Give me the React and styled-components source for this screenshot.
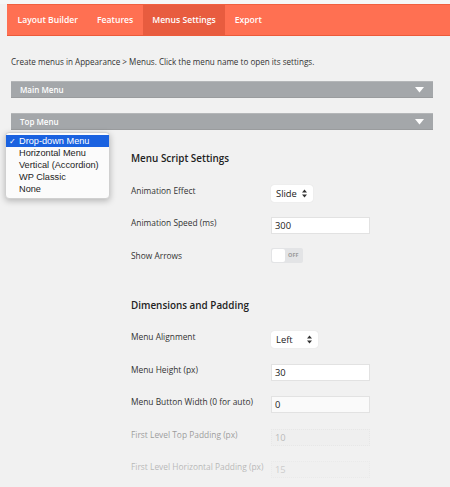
import React from 'react';
import styled, { createGlobalStyle } from 'styled-components';

const GlobalStyle = createGlobalStyle`
  html, body {
    margin: 0;
    padding: 0;
    background: #f1f1f1;
    font-family: "Open Sans", "Liberation Sans", sans-serif;
    color: #333;
  }
`;

const tabs = ['Layout Builder', 'Features', 'Menus Settings', 'Export'];
const menuOptions = ['Drop-down Menu', 'Horizontal Menu', 'Vertical (Accordion)', 'WP Classic', 'None'];

function Arrow() {
    return (
        <svg width="9" height="6" viewBox="0 0 9 6">
            <path d="M0 0 L9 0 L4.5 5.5 Z" fill="#fff" />
        </svg>
    )
}

function Stepper() {
    return (
        <svg width="5" height="9" viewBox="0 0 5 9">
            <path d="M2.5 0.5 L5 3.5 L0 3.5 Z M2.5 8.5 L5 5.5 L0 5.5 Z" fill="#333" />
        </svg>
    )
}

function App() {
    return (
        <Page>
            <GlobalStyle />
            <Nav>
                {tabs.map(t => (
                    <Tab key={t} active={t === 'Menus Settings'}>{t}</Tab>
                ))}
            </Nav>
            <Intro>Create menus in Appearance &gt; Menus. Click the menu name to open its settings.</Intro>
            <MenuBar>
                <span>Main Menu</span>
                <Arrow />
            </MenuBar>
            <MenuBlock>
                <MenuBar>
                    <span>Top Menu</span>
                    <Arrow />
                </MenuBar>
                <Popup>
                    {menuOptions.map((o, i) => (
                        <Option key={o} selected={i === 0}>
                            <Check>{i === 0 ? '✓' : ''}</Check>{o}
                        </Option>
                    ))}
                </Popup>
                <Settings>
                    <Heading>Menu Script Settings</Heading>
                    <Row>
                        <Label>Animation Effect</Label>
                        <Select width={42}>Slide <Stepper /></Select>
                    </Row>
                    <Row>
                        <Label>Animation Speed (ms)</Label>
                        <Input>300</Input>
                    </Row>
                    <Row>
                        <Label>Show Arrows</Label>
                        <Toggle>
                            <Knob />
                            <ToggleText>OFF</ToggleText>
                        </Toggle>
                    </Row>
                    <Heading second>Dimensions and Padding</Heading>
                    <Row>
                        <Label>Menu Alignment</Label>
                        <Select width={47}>Left <Stepper /></Select>
                    </Row>
                    <Row>
                        <Label>Menu Height (px)</Label>
                        <Input>30</Input>
                    </Row>
                    <Row>
                        <Label>Menu Button Width (0 for auto)</Label>
                        <Input muted>0</Input>
                    </Row>
                    <Row faded={0.45}>
                        <Label>First Level Top Padding (px)</Label>
                        <Input disabled>10</Input>
                    </Row>
                    <Row faded={0.3}>
                        <Label>First Level Horizontal Padding (px)</Label>
                        <Input disabled>15</Input>
                    </Row>
                </Settings>
            </MenuBlock>
        </Page>
    )
}

const Page = styled.div`
    width: 450px;
    height: 487px;
    overflow: hidden;
    padding-top: 4px;
    box-sizing: border-box;
    background: linear-gradient(#f5f7f7, #f5f7f7) top / 100% 4px no-repeat, #f1f1f1;
`;

const Nav = styled.div`
    display: flex;
    margin-left: 7px;
    height: 32px;
    background: #ff7052;
    border-top: 1px solid #f0603f;
    border-bottom: 1px solid #ec5a3a;
    box-sizing: border-box;
    padding-left: 1px;
`;

const Tab = styled.div`
    display: flex;
    align-items: center;
    padding: 0 9.5px;
    font-size: 8.6px;
    font-weight: 600;
    color: #fff;
    background: ${p => p.active ? '#e85c3f' : 'transparent'};
`;

const Intro = styled.div`
    margin: 20px 0 0 11px;
    font-size: 8.1px;
    color: #333;
    height: 12px;
`;

const MenuBar = styled.div`
    display: flex;
    align-items: center;
    justify-content: space-between;
    margin: 13px 17px 0 11px;
    height: 17px;
    padding: 0 9px 0 9px;
    background: #a4a7aa;
    border-top: 1px solid #b4b6b8;
    border-bottom: 1px solid #9a9c9e;
    box-sizing: border-box;
    font-size: 8px;
    font-weight: 600;
    color: #fff;
`;

const MenuBlock = styled.div`
    position: relative;
    margin-top: 15px;
    & > ${MenuBar} {
        margin-top: 0;
    }
`;

const Popup = styled.div`
    position: absolute;
    left: 5px;
    top: 19px;
    width: 105px;
    padding: 2px 0 3px;
    background: #fbfbfb;
    border: 1px solid #d0d0d0;
    border-radius: 4px;
    box-shadow: 0 2px 6px rgba(0, 0, 0, 0.25);
    box-sizing: border-box;
    font-family: "Liberation Sans", Arial, sans-serif;
    font-size: 9.2px;
`;

const Option = styled.div`
    display: flex;
    align-items: center;
    height: 12px;
    color: ${p => p.selected ? '#fff' : '#222'};
    background: ${p => p.selected ? '#1a62e0' : 'transparent'};
`;

const Check = styled.span`
    display: inline-block;
    width: 13px;
    text-align: center;
    font-size: 8px;
`;

const Settings = styled.div`
    padding: 20px 0 0 131px;
`;

const Heading = styled.div`
    font-size: 9.9px;
    font-weight: 600;
    color: #222;
    height: 16px;
    line-height: 16px;
    margin-top: ${p => p.second ? '22px' : '0'};
    margin-bottom: 11px;
`;

const Row = styled.div`
    display: grid;
    grid-template-columns: 140px 1fr;
    align-items: center;
    height: 32.5px;
    opacity: ${p => p.faded || 1};
`;

const Label = styled.div`
    font-size: 8.4px;
    color: #333;
    margin-top: -6px;
`;

const Select = styled.div`
    display: flex;
    align-items: center;
    justify-content: space-between;
    width: ${p => p.width}px;
    height: 17px;
    padding: 0 6px 0 5px;
    box-sizing: border-box;
    background: #fff;
    border-radius: 3px;
    box-shadow: 0 0 1px rgba(0, 0, 0, 0.15);
    font-size: 9.4px;
    color: #222;
`;

const Input = styled.div`
    width: 99px;
    height: 17px;
    padding-left: 3px;
    box-sizing: border-box;
    display: flex;
    align-items: center;
    background: ${p => p.disabled ? '#eeeeee' : p.muted ? '#fafafa' : '#fff'};
    border: 1px solid ${p => p.disabled ? '#dcdcdc' : '#e2e2e2'};
    border-style: ${p => p.disabled ? 'dotted' : 'solid'};
    font-size: 9.4px;
    color: ${p => p.disabled ? '#777' : '#222'};
`;

const Toggle = styled.div`
    position: relative;
    display: flex;
    align-items: center;
    width: 32px;
    height: 15px;
    margin-top: -6px;
    border-radius: 2px;
    background: #e3e4e6;
`;

const Knob = styled.div`
    position: absolute;
    left: 1px;
    top: 1px;
    width: 13px;
    height: 13px;
    border-radius: 2px;
    background: #fff;
`;

const ToggleText = styled.span`
    margin-left: 17px;
    font-size: 5.5px;
    font-weight: 700;
    color: #999;
`;

export default App
